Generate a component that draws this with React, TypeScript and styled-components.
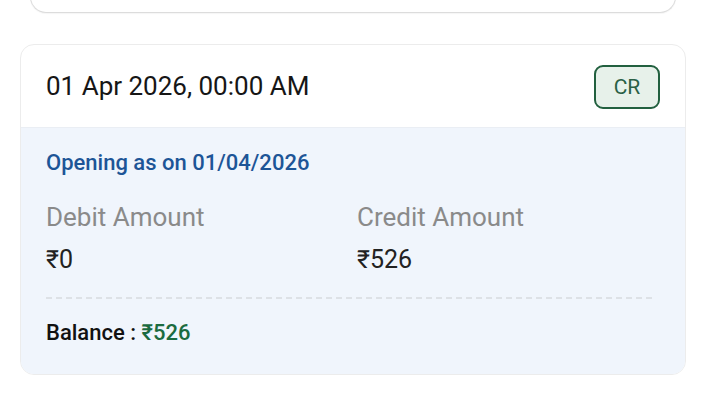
import React from "react";
import styled, { createGlobalStyle } from "styled-components";

const Global = createGlobalStyle`
  html, body { margin: 0; padding: 0; background: #ffffff; }
  body { font-family: Roboto, "Noto Sans", "Liberation Sans", sans-serif; -webkit-font-smoothing: antialiased; }
  * { box-sizing: border-box; }
`;

const Page = styled.div`
  width: 706px;
  height: 393px;
  overflow: hidden;
  background: #ffffff;
  display: flex;
  flex-direction: column;
`;

const PrevCard = styled.div`
  margin: -40px 30px 0 30px;
  height: 53px;
  flex-shrink: 0;
  border: 1.5px solid #dcdcdc;
  border-top: none;
  border-radius: 0 0 16px 16px;
  background: #ffffff;
  box-shadow: 0 1px 1px rgba(0, 0, 0, 0.04);
`;

const Card = styled.div`
  margin: 31px 20px 0 20px;
  border: 1.5px solid #ececec;
  border-radius: 14px;
  overflow: hidden;
  background: #ffffff;
  display: flex;
  flex-direction: column;
`;

const Header = styled.div`
  height: 83px;
  display: flex;
  align-items: center;
  justify-content: space-between;
  padding: 0 25px 0 25px;
  border-bottom: 1px solid #eaeef4;
`;

const DateText = styled.div`
  font-size: 26px;
  font-weight: 400;
  color: #161616;
  line-height: 30px;
`;

const Badge = styled.div`
  width: 66px;
  height: 44px;
  border: 2px solid #22603f;
  border-radius: 9px;
  background: #e7f1ea;
  color: #2a6146;
  font-size: 21px;
  display: flex;
  align-items: center;
  justify-content: center;
  margin-top: 2px;
`;

const Body = styled.div`
  background: #f0f5fc;
  padding: 23px 33px 28px 25px;
  display: flex;
  flex-direction: column;
`;

const Opening = styled.div`
  font-size: 22px;
  line-height: 24px;
  font-weight: 500;
  color: #1d5597;
`;

const Amounts = styled.div`
  display: grid;
  grid-template-columns: 311px 1fr;
  margin-top: 27px;
`;

const AmountCol = styled.div`
  display: flex;
  flex-direction: column;
  gap: 13px;
`;

const Label = styled.div`
  font-size: 26px;
  line-height: 30px;
  color: #8a8a8a;
`;

const Value = styled.div`
  font-size: 25px;
  line-height: 30px;
  color: #222222;
`;

const Divider = styled.div`
  margin-top: 22px;
  border-top: 2px dashed #dde1e6;
`;

const Balance = styled.div`
  margin-top: 21px;
  font-size: 22px;
  line-height: 26px;
  font-weight: 500;
  color: #111111;
`;

const Green = styled.span`
  color: #1b6b40;
`;

export default function App() {
  return (
    <Page>
      <Global />
      <PrevCard />
      <Card>
        <Header>
          <DateText>01 Apr 2026, 00:00 AM</DateText>
          <Badge>CR</Badge>
        </Header>
        <Body>
          <Opening>Opening as on 01/04/2026</Opening>
          <Amounts>
            <AmountCol>
              <Label>Debit Amount</Label>
              <Value>₹0</Value>
            </AmountCol>
            <AmountCol>
              <Label>Credit Amount</Label>
              <Value>₹526</Value>
            </AmountCol>
          </Amounts>
          <Divider />
          <Balance>
            Balance : <Green>₹526</Green>
          </Balance>
        </Body>
      </Card>
    </Page>
  );
}
